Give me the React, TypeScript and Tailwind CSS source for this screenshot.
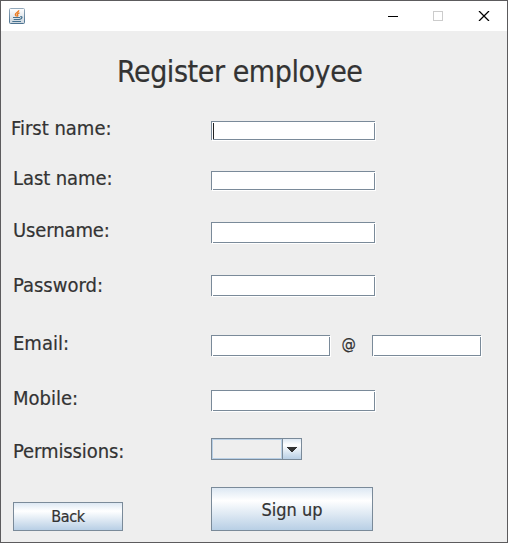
import React from "react";

function Field({ className, focused }: { className: string; focused?: boolean }) {
  return (
    <div className={`relative shrink-0 border-r border-b border-white ${className}`}>
      <div className="h-full w-full border border-[#7a8a99] bg-white pt-px pl-px">
        {focused && <div className="h-full w-px bg-[#222]" />}
      </div>
      <span className="absolute top-px right-0 h-px w-px bg-white" />
      <span className="absolute bottom-0 left-px h-px w-px bg-white" />
      <span className="absolute bottom-[-1px] left-0 h-px w-px bg-[#eeeeee]" />
      <span className="absolute top-0 right-[-1px] h-px w-px bg-[#eeeeee]" />
    </div>
  );
}

function Row({ label, className, labelClass, children }: {
  label: string;
  className: string;
  labelClass: string;
  children: React.ReactNode;
}) {
  return (
    <div className={`flex shrink-0 items-start ${className}`}>
      <div className="w-[210px] shrink-0">
        <div className={`w-fit whitespace-nowrap text-[20px] leading-[24px] ${labelClass}`}>{label}</div>
      </div>
      {children}
    </div>
  );
}

function JavaIcon() {
  return (
    <svg className="ml-2 h-4 w-4" viewBox="0 0 16 16" fill="none">
      <defs>
        <linearGradient id="cup" x1="0" y1="0" x2="0" y2="1">
          <stop offset="0" stopColor="#ffffff" />
          <stop offset="1" stopColor="#cbd5dd" />
        </linearGradient>
        <linearGradient id="frame" x1="0" y1="0" x2="0" y2="1">
          <stop offset="0" stopColor="#93a9bb" />
          <stop offset="1" stopColor="#4c7290" />
        </linearGradient>
      </defs>
      <rect x=".5" y=".5" width="15" height="15" rx="1" fill="url(#cup)" stroke="url(#frame)" />
      <path d="M9.8 2.200C9.800 4.300 6 4.800 6.400 6.600c.1.8.8 1.100 1.100 1.900M10.500 4.800C8.500 5.400 7.900 6.200 8.600 7c.4.6.3 1-.2 1.500" stroke="#ea7b22" strokeWidth="1.4" />
      <path d="M4 9.500h7M4.700 11.500h6M3.300 13.500h8.700M11.300 8.700c2.400-.3 2.300 1.900-.6 2.600" stroke="#45718f" strokeWidth="1.200" />
    </svg>
  );
}

export default function App() {
  return (
    <div className="flex h-[543px] w-[508px] flex-col overflow-hidden border border-[#5c5b5d] bg-[#eeeeee] text-[#333333] [-webkit-text-stroke:0.2px_#333] [font-family:'DejaVu_Sans_Condensed','DejaVu_Sans',sans-serif] [font-stretch:condensed]">
      <header className="flex h-[30px] shrink-0 items-center justify-between bg-white">
        <JavaIcon />
        <div className="flex pr-[17px]">
          <svg width="102" height="10" viewBox="0 0 102 10" fill="none" shapeRendering="crispEdges">
            <path d="M0 5.5h10" stroke="#000" />
            <path d="M45.5 .5h9v9h-9z" stroke="#ccc" />
            <path d="M91 0l10 10M101 0l-10 10" stroke="#000" strokeWidth="1.3" shapeRendering="auto" />
          </svg>
        </div>
      </header>
      <main className="flex flex-col">
        <h1 className="h-[75px] w-fit shrink-0 whitespace-nowrap pt-[23px] pl-[116px] text-[30px] leading-[36px] tracking-[-0.43px]">Register employee</h1>
        <Row label="First name:" className="h-[50px]" labelClass="ml-[10px] mt-[10px]">
          <Field className="mt-[15px] h-5 w-[165px]" focused />
        </Row>
        <Row label="Last name:" className="h-[51px]" labelClass="ml-[12px] mt-[10px] tracking-[-0.08px]">
          <Field className="mt-[15px] h-5 w-[165px]" />
        </Row>
        <Row label="Username:" className="h-[53px]" labelClass="ml-[12px] mt-[11px] tracking-[-0.12px]">
          <Field className="mt-[15px] h-[22px] w-[165px]" />
        </Row>
        <Row label="Password:" className="h-[60px]" labelClass="ml-[12px] mt-[13px]">
          <Field className="mt-[15px] h-[22px] w-[165px]" />
        </Row>
        <Row label="Email:" className="h-[55px]" labelClass="ml-[12px] mt-[11px]">
          <Field className="mt-[15px] h-[22px] w-[120px]" />
          <div className="mt-[14px] w-[41px] text-[16px] leading-5"><span className="ml-[10.5px]">@</span></div>
          <Field className="mt-[15px] h-[22px] w-[110px]" />
        </Row>
        <Row label="Mobile:" className="h-[55px]" labelClass="ml-[12px] mt-[11px]">
          <Field className="mt-[15px] h-[22px] w-[165px]" />
        </Row>
        <Row label="Permissions:" className="h-[50px]" labelClass="ml-[12px] mt-[9px] tracking-[-0.1px]">
          <div className="mt-2 flex h-[22px] w-[91px] border border-[#7a8a99]">
            <div className="w-[70px] border border-[#b8cfe5]" />
            <div className="flex flex-1 justify-center border-l border-[#7a8a99] bg-linear-to-b from-[#dde8f3] via-white via-30% to-[#b8cfe5] pt-2">
              <svg width="10" height="5" viewBox="0 0 10 5" shapeRendering="crispEdges" fill="#333">
                <path d="M0 0h10v1H0zM1 1h8v1H1zM2 2h6v1H2zM3 3h4v1H3zM4 4h2v1H4z" />
              </svg>
            </div>
          </div>
        </Row>
        <div className="flex h-[61px] items-start pl-3">
          <button className="mt-[22px] h-[29px] w-[110px] border border-[#7a8a99] bg-linear-to-b from-[#dde8f3] via-white via-30% to-[#b8cfe5] text-[16px] leading-5 tracking-[-0.4px]">Back</button>
          <button className="mt-[7px] ml-[88px] h-[44px] w-[162px] border border-[#7a8a99] bg-linear-to-b from-[#dde8f3] via-white via-30% to-[#b8cfe5] pt-[2px] text-[18px] leading-[22px]">Sign up</button>
        </div>
      </main>
    </div>
  );
}
